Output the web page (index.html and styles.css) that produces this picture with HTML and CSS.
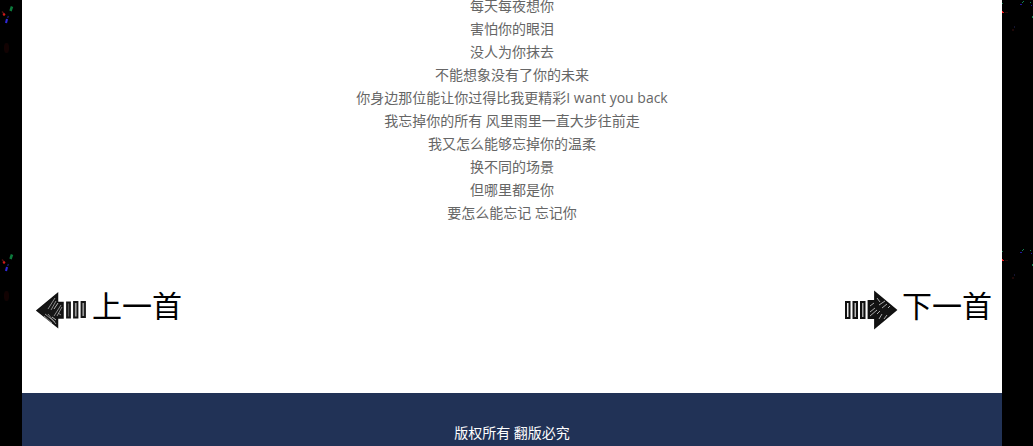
FILE: index.html
```html
<!DOCTYPE html>
<html lang="zh-CN">
<head>
<meta charset="utf-8">
<title>歌词</title>
<link rel="stylesheet" href="styles.css">
</head>
<body>
<div class="layout">
  <svg class="sparks" aria-hidden="true">
    <defs>
      <pattern id="sparks-left" width="22" height="248" patternUnits="userSpaceOnUse">
        <path d="M12 6.500L10.500 11" stroke="#0c7a3c" stroke-width="2.500"/>
        <path d="M2 11.500L5 15" stroke="#501010" stroke-width="1.200"/>
        <circle cx="4" cy="14.500" r="1.200" fill="#d01818"/>
        <path d="M8.500 16L7.500 18" stroke="#181860" stroke-width="1.500"/>
        <path d="M7 19L6 23" stroke="#3028d8" stroke-width="2"/>
        <ellipse cx="6.500" cy="48" rx="2.500" ry="5" fill="#120202"/>
      </pattern>
    </defs>
    <rect width="100%" height="100%" fill="url(#sparks-left)"/>
  </svg>
  <div class="page">
    <main class="song">
      <div class="lyrics">
        <p>每天每夜想你</p>
        <p>害怕你的眼泪</p>
        <p>没人为你抹去</p>
        <p>不能想象没有了你的未来</p>
        <p>你身边那位能让你过得比我更精彩I want you back</p>
        <p>我忘掉你的所有 风里雨里一直大步往前走</p>
        <p>我又怎么能够忘掉你的温柔</p>
        <p>换不同的场景</p>
        <p>但哪里都是你</p>
        <p>要怎么能忘记 忘记你</p>
      </div>
      <nav class="pager">
        <a class="pager-link" href="#prev">
          <svg class="arrow" viewBox="0 0 54 42" aria-hidden="true">
            <path d="M3 21.500L23.500 4.500V13.500H29V29H23.500V38Z" fill="#151515" stroke="#111" stroke-width="1.500"/>
            <path d="M14 20L21 9M17 21L22 12M11 25L21 33M14 25L22 35M10 27L18 34M20 27L27 16M23 27L28 18M24 24L27 26" stroke="#aaa" stroke-width=".8"/>
            <path d="M18 28L22 31M20 20L24 14" stroke="#ddd" stroke-width=".8"/>
            <g fill="#999" stroke="#161616" stroke-width="1.800">
              <path d="M33 13.500H36V28.500H33Z" fill="#555"/>
              <path d="M40 13H43.500V28.500H40Z"/>
              <path d="M47.500 13H51V28H47.500Z"/>
            </g>
          </svg>
          <span>上一首</span>
        </a>
        <a class="pager-link" href="#next">
          <svg class="arrow" viewBox="0 0 54 42" aria-hidden="true">
            <path d="M52 21L31 3.500V12H24.500V29H31V38.500Z" fill="#131313" stroke="#111" stroke-width="1.800"/>
            <path d="M26 17L30 14M26 23L31 19M26 27L33 21M33 9L36 13M35 16L41 12M38 19L43 15M35 30L38 25M33 25L36 22M40 30L43 26M44 19L46 17" stroke="#bbb" stroke-width=".9"/>
            <g fill="#bbb" stroke="#111" stroke-width="2">
              <path d="M2 13H5.500V29H2Z" fill="#eee"/>
              <path d="M9.500 13H13V29H9.500Z"/>
              <path d="M17 13H20.500V29H17Z" fill="#aaa"/>
            </g>
          </svg>
          <span>下一首</span>
        </a>
      </nav>
    </main>
    <footer class="footer">版权所有 翻版必究</footer>
  </div>
  <svg class="sparks" aria-hidden="true">
    <defs>
      <pattern id="sparks-right" width="31" height="248" patternUnits="userSpaceOnUse">
        <path d="M0 3H1V4H0ZM20 2H21V3H20ZM21 1H22V2H21ZM28 2H29V3H28ZM30 16H31V18H30Z" fill="#128050"/>
        <path d="M18 4H20V5H18ZM29 5H30V6H29Z" fill="#2218a0"/>
        <path d="M0 11H1V12H2V13H0Z" fill="#f01818"/>
        <path d="M3 12H6V13H3ZM10 29H12V31H10Z" fill="#200808"/>
        <path d="M12 26H13V28H12Z" fill="#141430"/>
      </pattern>
    </defs>
    <rect width="100%" height="100%" fill="url(#sparks-right)"/>
  </svg>
</div>
</body>
</html>
```
FILE: styles.css
```css
body {
  margin: 0;
  background: #000;
  color: #666;
  font-family: "Open Sans", "Noto Sans CJK SC", sans-serif;
  font-size: 14px;
  line-height: 23px;
}

.layout {
  display: grid;
  grid-template-columns: 22px 1fr 31px;
  min-height: 100vh;
  overflow: hidden;
}

.sparks {
  width: 100%;
  height: 100%;
}

.page {
  display: flex;
  flex-direction: column;
  background: #fff;
}

.lyrics {
  margin-top: -6px;
  text-align: center;
}

.lyrics p {
  margin: 0;
}

.pager {
  display: flex;
  justify-content: space-between;
  padding: 64px 10px 62px 12px;
}

.pager-link {
  display: flex;
  align-items: center;
  gap: 4px;
  color: #000;
  font-family: "Noto Sans CJK SC", sans-serif;
  font-size: 30px;
  line-height: 32px;
  text-decoration: none;
}

.pager-link span {
  padding-bottom: 11px;
}

.arrow {
  width: 54px;
  height: 42px;
  fill: none;
}

.footer {
  flex: 1;
  padding: 28px 0 14px;
  background: #213256;
  color: #fff;
  text-align: center;
}
```
